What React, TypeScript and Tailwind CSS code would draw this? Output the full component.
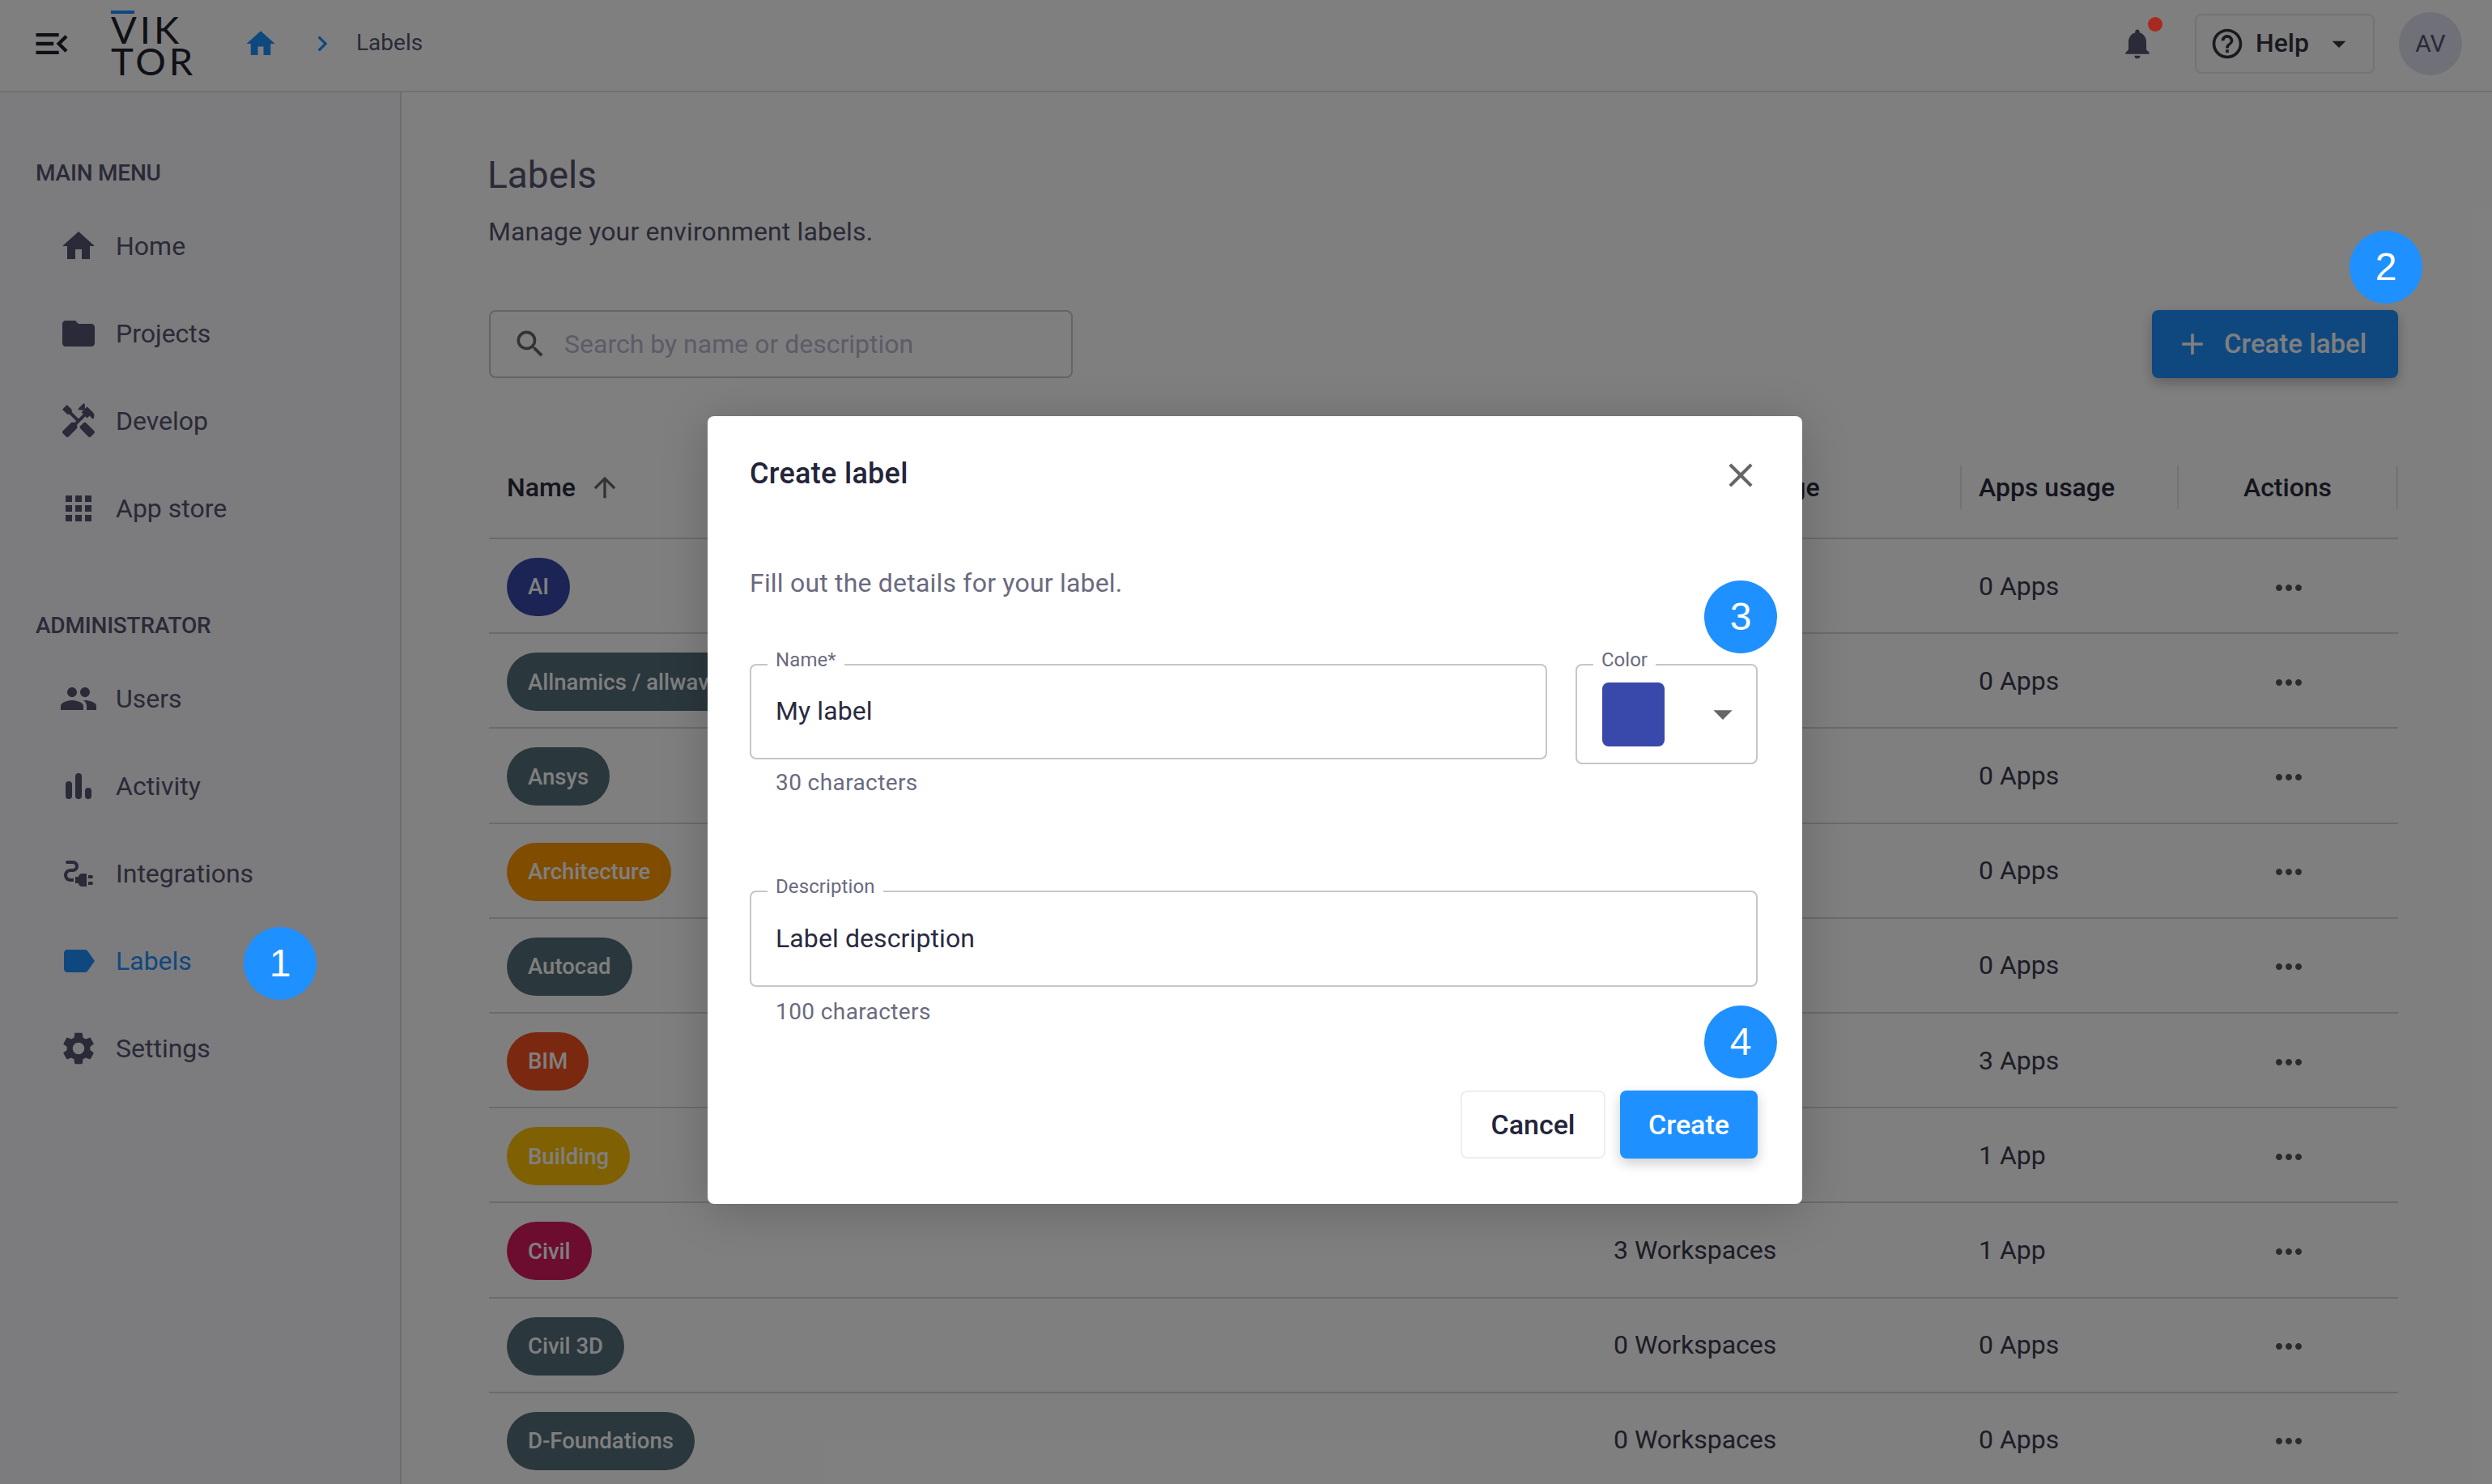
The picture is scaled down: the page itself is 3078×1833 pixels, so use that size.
import type { ReactNode } from "react";
import {
  MdAdd,
  MdApps,
  MdArrowDropDown,
  MdArrowUpward,
  MdChevronRight,
  MdClose,
  MdElectricalServices,
  MdFolder,
  MdHandyman,
  MdHelpOutline,
  MdHome,
  MdLabel,
  MdMenuOpen,
  MdMoreHoriz,
  MdNotifications,
  MdPeople,
  MdSearch,
  MdSettings,
} from "react-icons/md";

const mainMenu = [
  { name: "Home", icon: <MdHome size={48} /> },
  { name: "Projects", icon: <MdFolder size={48} /> },
  { name: "Develop", icon: <MdHandyman size={48} /> },
  { name: "App store", icon: <MdApps size={48} /> },
];

function ActivityIcon() {
  return (
    <svg width="48" height="48" viewBox="0 0 24 24" fill="currentColor">
      <rect x="4" y="9" width="4" height="11" rx="2" />
      <rect x="10" y="4" width="4" height="16" rx="2" />
      <rect x="16" y="13" width="4" height="7" rx="2" />
    </svg>
  );
}

const adminMenu = [
  { name: "Users", icon: <MdPeople size={48} /> },
  { name: "Activity", icon: <ActivityIcon /> },
  { name: "Integrations", icon: <MdElectricalServices size={48} /> },
  { name: "Labels", icon: <MdLabel size={48} />, active: true },
  { name: "Settings", icon: <MdSettings size={48} /> },
];

const labels = [
  { name: "AI", color: "bg-[#3949ab]", workspaces: "0 Workspaces", apps: "0 Apps" },
  { name: "Allnamics / allwaves", color: "bg-[#546e7a]", workspaces: "0 Workspaces", apps: "0 Apps" },
  { name: "Ansys", color: "bg-[#546e7a]", workspaces: "0 Workspaces", apps: "0 Apps" },
  { name: "Architecture", color: "bg-[#ff9800]", workspaces: "0 Workspaces", apps: "0 Apps" },
  { name: "Autocad", color: "bg-[#546e7a]", workspaces: "0 Workspaces", apps: "0 Apps" },
  { name: "BIM", color: "bg-[#f4511e]", workspaces: "0 Workspaces", apps: "3 Apps" },
  { name: "Building", color: "bg-[#ffc107]", workspaces: "0 Workspaces", apps: "1 App" },
  { name: "Civil", color: "bg-[#d81b60]", workspaces: "3 Workspaces", apps: "1 App" },
  { name: "Civil 3D", color: "bg-[#546e7a]", workspaces: "0 Workspaces", apps: "0 Apps" },
  { name: "D-Foundations", color: "bg-[#546e7a]", workspaces: "0 Workspaces", apps: "0 Apps" },
];

const tableCols = "grid grid-cols-[1367px_450px_270px_271px]";

function MenuItem({ name, icon, active }: { name: string; icon: ReactNode; active?: boolean }) {
  return (
    <div className={`flex h-[108px] items-center gap-[22px] pl-[73px] ${active ? "text-[#1e90ff]" : "text-[#545470]"}`}>
      <span className="flex w-[48px] justify-center">{icon}</span>
      <span className="text-[32px]">{name}</span>
    </div>
  );
}

function Step({ n, className }: { n: number; className: string }) {
  return (
    <div
      className={`absolute z-20 flex h-[90px] w-[90px] items-center justify-center rounded-full bg-[#1e90ff] font-['Liberation_Sans',sans-serif] text-[48px] text-white ${className}`}
    >
      {n}
    </div>
  );
}

function Field({ label, value, className }: { label: string; value: string; className: string }) {
  return (
    <div className={`relative flex items-center rounded-lg border-2 border-[#c6c6ca] pb-[2px] pl-[30px] text-[32px] tracking-[0.1px] text-[#2a2a40] ${className}`}>
      <span className="absolute -top-[25px] left-[20px] bg-white px-[10px] text-[24px] text-[#6a6a80]">{label}</span>
      {value}
    </div>
  );
}

export default function App() {
  return (
    <div className="relative h-[1833px] w-[3078px] overflow-hidden bg-white font-[Roboto,sans-serif] text-[#545470]">
      <header className="flex h-[114px] items-center border-b-2 border-[#e2e2e4] pr-[37px] pb-[5px]">
        <MdMenuOpen size={52} className="ml-[38px] text-[#1f1f2c]" />
        <div className="ml-[47px] w-[110px] font-[Lato,sans-serif] text-[47px] leading-[39px] font-normal tracking-[4px] text-[#20202a]">
          <div className="h-[4px] w-[29px] bg-[#1e90ff]" />
          <div>VIK</div>
          <div>TOR</div>
        </div>
        <MdHome size={42} className="ml-[54px] text-[#1e90ff]" />
        <MdChevronRight size={38} className="ml-[36px] text-[#1e90ff]" />
        <span className="-mt-[2px] ml-[23px] text-[28px]">Labels</span>

        <div className="relative ml-auto text-[#545470]">
          <MdNotifications size={44} />
          <span className="absolute -top-[11px] left-[35px] z-20 h-[18px] w-[18px] rounded-full bg-[#a9291f]" />
        </div>
        <div className="ml-[49px] flex h-[74px] w-[222px] items-center rounded-lg border-2 border-[#e6e6e8] pl-[16px] text-[#32323e]">
          <MdHelpOutline size={44} />
          <span className="-mt-[2px] ml-[13px] text-[32px] font-medium">Help</span>
          <MdArrowDropDown size={40} className="ml-[17px]" />
        </div>
        <div className="ml-[30px] flex h-[78px] w-[78px] items-center justify-center rounded-full bg-[#e0e0f0] text-[30px]">
          AV
        </div>
      </header>

      <div className="flex">
        <aside className="h-[1719px] w-[496px] shrink-0 border-r-2 border-[#dcdcdc] bg-[#f8f8fc] pt-[82px]">
          <div className="pl-[44px] text-[28px] leading-[36px] font-medium tracking-[-0.2px]">MAIN MENU</div>
          <nav className="mt-[18px]">
            {mainMenu.map((item) => (
              <MenuItem key={item.name} {...item} />
            ))}
          </nav>
          <div className="mt-[73px] pl-[44px] text-[28px] leading-[36px] font-medium tracking-[-0.2px]">ADMINISTRATOR</div>
          <nav className="mt-[18px]">
            {adminMenu.map((item) => (
              <MenuItem key={item.name} {...item} />
            ))}
          </nav>
        </aside>

        <main className="flex-1 pt-[74px] pl-[108px]">
          <h1 className="-ml-[2px] text-[46px] leading-[56px]">Labels</h1>
          <p className="mt-[22px] -ml-[1px] text-[32px] leading-[40px] tracking-[0.13px]">Manage your environment labels.</p>

          <div className="mt-[77px] flex w-[2358px] items-start justify-between">
            <div className="flex h-[84px] w-[721px] items-center rounded-lg border-2 border-[#c8c8cc] pl-[27px]">
              <MdSearch size={44} className="text-[#666666]" />
              <span className="ml-[20px] text-[32px] text-[#b8b8d0]">Search by name or description</span>
            </div>
            <div className="flex h-[84px] w-[304px] items-center rounded-lg bg-[#1e90ff] pl-[28px] text-white shadow-[0_6px_16px_rgba(0,0,0,0.25)]">
              <MdAdd size={44} />
              <span className="ml-[17px] text-[33px] font-medium">Create label</span>
            </div>
          </div>

          <div className="mt-[81px] w-[2358px] text-[32px]">
            <div className={`${tableCols} h-[118px] items-center border-b-2 border-[#d6d6d6] pb-[8px] font-medium text-[#2a2a3c]`}>
              <div className="flex items-center gap-[16px] pl-[22px]">
                Name
                <MdArrowUpward size={40} className="text-[#666666]" />
              </div>
              <div className="pl-[6px]">Workspaces usage</div>
              <div className="flex h-[54px] items-center border-x-2 border-[#e6e6e6] pl-[21px]">Apps usage</div>
              <div className="flex h-[54px] items-center justify-center border-r-2 border-[#e6e6e6]">Actions</div>
            </div>
            {labels.map((label) => (
              <div key={label.name} className={`${tableCols} h-[117.2px] items-center border-b-2 border-[#d6d6d6] text-[#3a3a4e]`}>
                <div className="pt-[3px] pl-[22px]">
                  <span className={`inline-flex h-[72px] items-center rounded-full px-[26px] text-[27.5px] font-medium text-white ${label.color}`}>
                    {label.name}
                  </span>
                </div>
                <div className="pl-[22px]">{label.workspaces}</div>
                <div className="pl-[23px]">{label.apps}</div>
                <div className="flex justify-center pt-[4px] text-[#55555f]">
                  <MdMoreHoriz size={48} />
                </div>
              </div>
            ))}
          </div>
        </main>
      </div>

      <div className="absolute inset-0 z-10 bg-black/50" />

      <div className="absolute top-[514px] left-[874px] z-10 h-[973px] w-[1352px] rounded-lg bg-white pt-[49px] pr-[55px] pl-[52px] shadow-[0_8px_60px_rgba(0,0,0,0.2)]">
        <div className="flex h-[44px] items-center justify-between">
          <h2 className="text-[36px] font-medium tracking-[0.3px] text-[#24243a]">Create label</h2>
          <MdClose size={50} className="-mr-[4px] translate-y-[2px] text-[#666666]" />
        </div>
        <p className="mt-[93px] text-[32px] leading-[40px] tracking-[0.2px] text-[#6a6a80]">Fill out the details for your label.</p>

        <div className="mt-[80px] flex items-start gap-[35px]">
          <div className="flex-1">
            <Field label="Name*" value="My label" className="h-[118px]" />
            <div className="mt-[13px] pl-[32px] text-[28px] leading-[32px] tracking-[0.4px] text-[#6a6a80]">30 characters</div>
          </div>
          <div className="relative flex h-[124px] w-[225px] items-center rounded-lg border-2 border-[#c6c6ca] pl-[31px] text-[#666666]">
            <span className="absolute -top-[25px] left-[20px] bg-white px-[10px] text-[24px] text-[#6a6a80]">Color</span>
            <span className="h-[79px] w-[77px] rounded-lg bg-[#3949ab]" />
            <MdArrowDropDown size={56} className="ml-[44px]" />
          </div>
        </div>

        <div className="mt-[117px]">
          <Field label="Description" value="Label description" className="h-[119px]" />
          <div className="mt-[15px] pl-[32px] text-[28px] leading-[32px] tracking-[0.4px] text-[#6a6a80]">100 characters</div>
        </div>

        <div className="mt-[81px] flex justify-end gap-[18px]">
          <div className="flex h-[84px] w-[179px] items-center justify-center rounded-lg border-2 border-[#eeeeee] text-[34px] font-medium text-[#24243a]">
            Cancel
          </div>
          <div className="flex h-[84px] w-[170px] items-center justify-center rounded-lg bg-[#1e90ff] text-[34px] font-medium text-white shadow-[0_6px_16px_rgba(0,0,0,0.2)]">
            Create
          </div>
        </div>
      </div>

      <Step n={1} className="top-[1145px] left-[301px]" />
      <Step n={2} className="top-[285px] left-[2902px]" />
      <Step n={3} className="top-[717px] left-[2105px]" />
      <Step n={4} className="top-[1242px] left-[2105px]" />
    </div>
  );
}
